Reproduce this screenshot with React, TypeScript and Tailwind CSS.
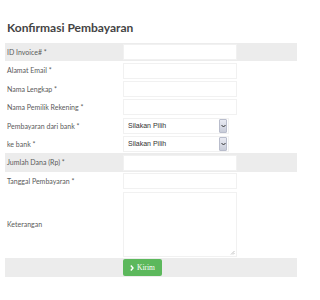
import React from "react";

const rows = [
  { label: "ID Invoice# *", kind: "input", shade: true },
  { label: "Alamat Email *", kind: "input" },
  { label: "Nama Lengkap *", kind: "input" },
  { label: "Nama Pemilik Rekening *", kind: "input" },
  { label: "Pembayaran dari bank *", kind: "select" },
  { label: "ke bank *", kind: "select" },
  { label: "Jumlah Dana (Rp) *", kind: "input", shade: true },
  { label: "Tanggal Pembayaran *", kind: "input" },
];

function SelectBox() {
  return (
    <div className="flex items-center w-[106px] h-[16px] bg-white border border-[#f1f1f1]">
      <span className="flex-1 pl-[4px] text-[7px] text-[#333] font-['Liberation_Sans',sans-serif]">
        Silakan Pilih
      </span>
      <span className="flex items-center justify-center w-[8px] h-[14px] mr-px bg-gradient-to-b from-[#e9ebf3] to-[#c9cdd9] border border-[#b9bdcc] rounded-[1px]">
        <svg width="5" height="4" viewBox="0 0 5 4">
          <path d="M0.5 1 L2.5 3 L4.5 1" fill="none" stroke="#333" strokeWidth="1" />
        </svg>
      </span>
    </div>
  );
}

export default function App() {
  return (
    <div className="w-[300px] h-[300px] bg-white font-['Lato',sans-serif] pt-[19px]">
      <h1 className="pl-[7px] text-[12px] font-bold text-[#444] leading-[18px]">
        Konfirmasi Pembayaran
      </h1>

      <div className="mt-[6px] ml-[5px] w-[292px] flex flex-col">
        {rows.map((r) => (
          <div
            key={r.label}
            className={`flex items-center h-[18.4px] ${r.shade ? "bg-[#ececec]" : ""}`}
          >
            <span className="w-[118px] pl-[2px] text-[7px] text-[#5a5a5a]">{r.label}</span>
            {r.kind === "input" ? (
              <div className="w-[114px] h-[16px] bg-white border border-[#f1f1f1]" />
            ) : (
              <SelectBox />
            )}
          </div>
        ))}

        <div className="flex items-center h-[68px]">
          <span className="w-[118px] pl-[2px] text-[7px] text-[#5a5a5a]">Keterangan</span>
          <div className="relative w-[114px] h-[65px] bg-white border border-[#f1f1f1]">
            <svg className="absolute right-[1px] bottom-[1px]" width="5" height="5" viewBox="0 0 5 5">
              <path d="M1 4.5 L4.5 1 M3 4.5 L4.5 3" stroke="#aaa" strokeWidth="0.7" />
            </svg>
          </div>
        </div>

        <div className="flex items-center h-[19px] bg-[#ececec]">
          <span className="w-[118px]" />
          <button className="flex items-center gap-[3px] h-[17px] px-[7px] bg-[#5cb85c] rounded-[2px] text-white text-[7.5px] font-['Liberation_Serif',serif]">
            <svg width="4" height="6" viewBox="0 0 4 6">
              <path d="M0.8 0.5 L3 3 L0.8 5.5" fill="none" stroke="white" strokeWidth="1.4" />
            </svg>
            Kirim
          </button>
        </div>
      </div>
    </div>
  );
}
